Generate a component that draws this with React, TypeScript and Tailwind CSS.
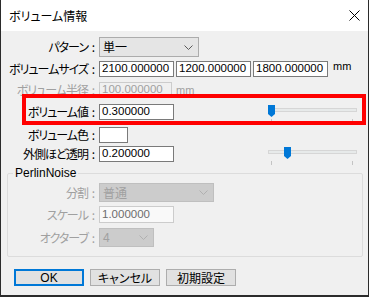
import React from "react";

const jp = "font-['Meiryo_UI','Noto_Sans_CJK_JP',sans-serif] [font-feature-settings:'palt']";
const num = "font-['Liberation_Sans','Noto_Sans_CJK_JP',sans-serif]";

const Chevron: React.FC<{ color?: string }> = ({ color = "#5a5a5a" }) => (
  <svg width="9" height="5" viewBox="0 0 9 5" className="shrink-0">
    <path d="M0.5 0.5 L4.5 4.5 L8.5 0.5" fill="none" stroke={color} strokeWidth="1" />
  </svg>
);

const Label: React.FC<{ text: string; disabled?: boolean }> = ({ text, disabled }) => (
  <div
    className={`w-[98px] shrink-0 flex justify-end items-center text-[12px] leading-none whitespace-nowrap ${jp} ${
      disabled ? "text-[#a0a0a0]" : "text-black"
    }`}
  >
    <span className="tracking-[-1px]">{text}</span>
    <span className="w-[11px] text-center">:</span>
  </div>
);

const TextBox: React.FC<{ value: string; disabled?: boolean; w?: string }> = ({ value, disabled, w = "w-[75px]" }) => (
  <div
    className={`${w} h-[16px] shrink-0 border flex items-center px-[2px] text-[11.5px] leading-none ${num} ${
      disabled ? "border-[#cccccc] bg-[#f0f0f0] text-[#a0a0a0]" : "border-[#7a7a7a] bg-white text-black"
    }`}
  >
    {value}
  </div>
);

const Slider: React.FC<{ pos: number }> = ({ pos }) => (
  <div className="relative ml-auto mr-[11px] w-[89px] h-[20px] self-start">
    <div className="absolute left-0 right-0 top-[4px] h-[4px] bg-[#e7eaea] border border-[#d6d6d6]" />
    <div className="absolute top-[1px]" style={{ left: pos }}>
      <svg width="7" height="12" viewBox="0 0 7 12">
        <path d="M0 0 H7 V9 L3.5 12 L0 9 Z" fill="#0078d7" />
      </svg>
    </div>
    <div className="absolute left-[3px] top-[15px] w-px h-[4px] bg-[#c4c4c4]" />
    <div className="absolute left-[84px] top-[15px] w-px h-[4px] bg-[#c4c4c4]" />
  </div>
);

const Btn: React.FC<{ text: string; primary?: boolean; latin?: boolean }> = ({ text, primary, latin }) => (
  <div
    className={`w-[70px] h-[17px] flex items-center justify-center bg-[#e1e1e1] text-[12px] leading-none text-black ${
      latin ? num : jp
    } ${primary ? "border-2 border-[#0078d7]" : "border border-[#adadad]"}`}
  >
    {text}
  </div>
);

const App: React.FC = () => {
  return (
    <div className="relative w-[369px] h-[297px] bg-[#2b2b2b] overflow-hidden">
      <div className="w-[367px] h-[295px] ml-px flex flex-col">
        {/* タイトルバー */}
        <div className="h-[31px] bg-white flex items-center justify-between pl-[8px] pr-[8px]">
          <span className={`text-[12px] text-black ${jp}`}>ボリューム情報</span>
          <svg width="11" height="11" viewBox="0 0 11 11">
            <path d="M0.5 0.5 L10.5 10.5 M10.5 0.5 L0.5 10.5" stroke="#000" strokeWidth="1" />
          </svg>
        </div>

        {/* 本体 */}
        <div className="flex-1 bg-[#f0f0f0] flex flex-col">
          <div className="mt-[6px] h-[20px] flex items-center">
            <Label text="パターン" />
            <div className="w-[100px] h-[20px] border border-[#acacac] bg-[#e5e5e5] flex items-center justify-between pl-[3px] pr-[5px]">
              <span className={`text-[12px] leading-none text-black ${jp}`}>単一</span>
              <Chevron />
            </div>
          </div>

          <div className="mt-[4px] h-[16px] flex items-center">
            <Label text="ボリュームサイズ" />
            <div className="flex gap-[2px]">
              <TextBox value="2100.000000" />
              <TextBox value="1200.000000" />
              <TextBox value="1800.000000" />
            </div>
            <span className={`ml-[5px] self-start text-[11px] leading-none text-black ${num}`}>mm</span>
          </div>

          <div className="mt-[5px] h-[16px] flex items-center">
            <Label text="ボリューム半径" disabled />
            <TextBox value="100.000000" disabled w="w-[73px]" />
            <span className={`ml-[4px] text-[11px] text-[#a0a0a0] ${num}`}>mm</span>
          </div>

          <div className="mt-[6px] h-[16px] flex items-center">
            <Label text="ボリューム値" />
            <TextBox value="0.300000" />
            <Slider pos={0} />
          </div>

          <div className="mt-[7px] h-[16px] flex items-center">
            <Label text="ボリューム色" />
            <div className="w-[29px] h-[16px] bg-white border border-[#7a7a7a]" />
          </div>

          <div className="mt-[3px] h-[16px] flex items-center">
            <Label text="外側ほど透明" />
            <TextBox value="0.200000" />
            <Slider pos={16} />
          </div>

          {/* PerlinNoise グループ */}
          <fieldset className="mt-[5px] ml-[6px] w-[356px] h-[90px] border border-[#dcdcdc] rounded-[2px]">
            <legend className={`ml-[5px] px-[2px] text-[12px] leading-none text-black ${num}`}>PerlinNoise</legend>
            <div className="mt-[4px] h-[19px] flex items-center -ml-[7px]">
              <Label text="分割" disabled />
              <div className="w-[115px] h-[19px] border border-[#bfbfbf] bg-[#cccccc] flex items-center justify-between pl-[3px] pr-[5px]">
                <span className={`text-[12px] leading-none text-[#a0a0a0] ${jp}`}>普通</span>
                <Chevron color="#b0b0b0" />
              </div>
            </div>
            <div className="mt-[4px] h-[17px] flex items-center -ml-[7px]">
              <Label text="スケール" disabled />
              <div className="w-[75px] h-[17px] border border-[#cccccc] bg-[#f9f9f9] flex items-center px-[2px]">
                <span className={`text-[11.5px] leading-none text-[#6d6d6d] ${num}`}>1.000000</span>
              </div>
            </div>
            <div className="mt-[5px] h-[19px] flex items-center -ml-[7px]">
              <Label text="オクターブ" disabled />
              <div className="w-[55px] h-[19px] border border-[#bfbfbf] bg-[#cccccc] flex items-center justify-between pl-[3px] pr-[5px]">
                <span className={`text-[12px] leading-none text-[#a0a0a0] ${num}`}>4</span>
                <Chevron color="#b0b0b0" />
              </div>
            </div>
          </fieldset>

          <div className="mt-[12px] ml-[13px] flex gap-[6px]">
            <Btn text="OK" primary latin />
            <Btn text="キャンセル" />
            <Btn text="初期設定" />
          </div>
        </div>
      </div>

      {/* 注目枠 */}
      <div className="absolute left-[22px] top-[94px] w-[344px] h-[31px] border-4 border-[#ff0000] pointer-events-none" />
    </div>
  );
};

export default App;
